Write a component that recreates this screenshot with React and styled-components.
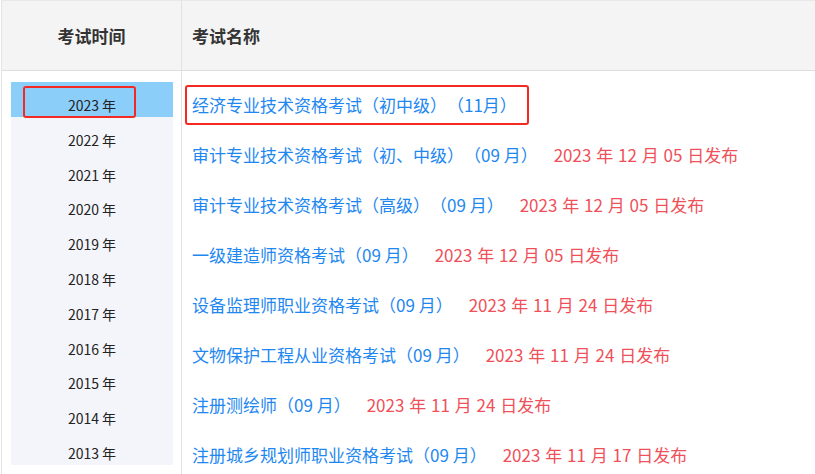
import React from "react";
import styled, { createGlobalStyle } from "styled-components";

const GlobalStyle = createGlobalStyle`
  html, body {
    margin: 0;
    padding: 0;
    background: #fff;
    overflow: hidden;
  }
  body {
    font-family: "Noto Sans CJK SC", "Noto Sans", sans-serif;
    text-spacing-trim: space-all;
  }
`;

const years = [2023, 2022, 2021, 2020, 2019, 2018, 2017, 2016, 2015, 2014, 2013];

const exams = [
  { title: "经济专业技术资格考试（初中级）（11月）", active: true },
  { title: "审计专业技术资格考试（初、中级）（09 月）", date: "2023 年 12 月 05 日发布" },
  { title: "审计专业技术资格考试（高级）（09 月）", date: "2023 年 12 月 05 日发布" },
  { title: "一级建造师资格考试（09 月）", date: "2023 年 12 月 05 日发布" },
  { title: "设备监理师职业资格考试（09 月）", date: "2023 年 11 月 24 日发布" },
  { title: "文物保护工程从业资格考试（09 月）", date: "2023 年 11 月 24 日发布" },
  { title: "注册测绘师（09 月）", date: "2023 年 11 月 24 日发布" },
  { title: "注册城乡规划师职业资格考试（09 月）", date: "2023 年 11 月 17 日发布" },
];

const Table = styled.div`
  margin-left: 1px;
  border-left: 1px solid #e4e4e4;
  border-top: 1px solid #e6e8ec;
  display: grid;
  grid-template-columns: 180px 1fr;
  grid-template-rows: 70px auto;
  height: 473px;
`;

const HeadCell = styled.div`
  background: #f4f4f4;
  border-bottom: 1px solid #dedede;
  border-right: ${(p) => (p.$first ? "1px solid #e2e2e2" : "none")};
  display: flex;
  align-items: center;
  justify-content: ${(p) => (p.$center ? "center" : "flex-start")};
  padding-left: ${(p) => (p.$center ? "0" : "10px")};
  font-size: 17px;
  font-weight: 700;
  color: #333;
`;

const YearCol = styled.div`
  border-right: 1px solid #e2e2e2;
  padding: 11px 8px 0 9px;
`;

const YearList = styled.ul`
  list-style: none;
  margin: 0;
  padding: 0;
  background: #f4f5fa;
`;

const YearItem = styled.li`
  position: relative;
  height: 34.8px;
  box-sizing: border-box;
  padding-top: 12px;
  line-height: 22px;
  text-align: center;
  font-size: 14px;
  color: #222;
  background: ${(p) => (p.$active ? "#8ccefa" : "transparent")};

  ${(p) =>
    p.$active &&
    `
    &::after {
      content: "";
      position: absolute;
      left: 12px;
      right: 37px;
      top: 4px;
      bottom: -1px;
      border: 2px solid #f42a22;
      border-radius: 3px;
    }
  `}
`;

const ExamCol = styled.div`
  padding: 9px 0 0 10px;
`;

const ExamRow = styled.div`
  display: flex;
  align-items: baseline;
  gap: 16px;
  height: 50px;
  line-height: 50px;
  font-size: 17px;
  white-space: nowrap;
`;

const ExamLink = styled.a`
  position: relative;
  color: #1e87f0;
  text-decoration: none;

  ${(p) =>
    p.$active &&
    `
    &::after {
      content: "";
      position: absolute;
      left: -7px;
      right: -12px;
      top: 5px;
      bottom: 5px;
      border: 2px solid #f42a22;
      border-radius: 3px;
    }
  `}
`;

const PubDate = styled.span`
  color: #ef5059;
  word-spacing: 1px;
`;

export default function App() {
  return (
    <>
      <GlobalStyle />
      <Table>
        <HeadCell $first $center>考试时间</HeadCell>
        <HeadCell>考试名称</HeadCell>
        <YearCol>
          <YearList>
            {years.map((y, i) => (
              <YearItem key={y} $active={i === 0}>
                {y} 年
              </YearItem>
            ))}
          </YearList>
        </YearCol>
        <ExamCol>
          {exams.map((e) => (
            <ExamRow key={e.title}>
              <ExamLink href="#" $active={e.active}>
                {e.title}
              </ExamLink>
              {e.date && <PubDate>{e.date}</PubDate>}
            </ExamRow>
          ))}
        </ExamCol>
      </Table>
    </>
  );
}
